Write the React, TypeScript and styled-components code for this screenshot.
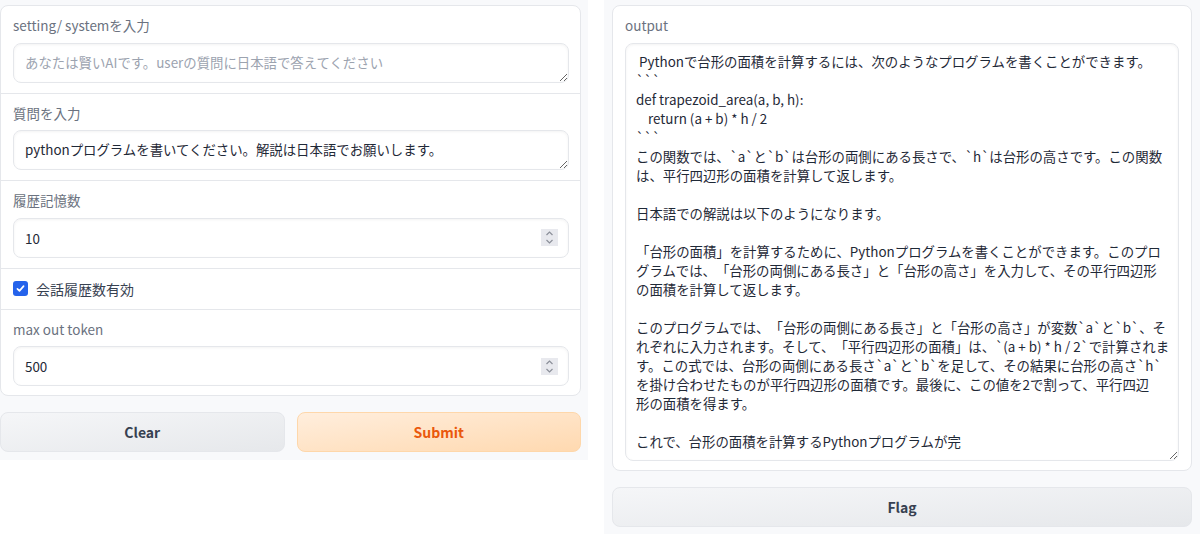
import styled, { createGlobalStyle } from 'styled-components';

const GlobalStyle = createGlobalStyle`
  html, body {
    margin: 0;
    padding: 0;
    background: #ffffff;
  }
  body {
    font-family: "Noto Sans CJK JP", "Liberation Sans", sans-serif;
    color: #1f2937;
    text-spacing-trim: space-all;
  }
  * {
    box-sizing: border-box;
  }
`;

const Page = styled.div`
  display: flex;
  gap: 16px;
  width: 1200px;
  height: 534px;
  align-items: flex-start;
`;

const Column = styled.div<{ $side: 'left' | 'right' }>`
  display: flex;
  flex-direction: column;
  gap: 16px;
  background: #f8f9fb;
  width: ${p => (p.$side === 'left' ? '588px' : '596px')};
  height: ${p => (p.$side === 'left' ? '460px' : '534px')};
  padding: ${p => (p.$side === 'left' ? '5px 7px 8px 0' : '5px 8px 7px 8px')};
`;

const Panel = styled.div`
  display: flex;
  flex-direction: column;
  background: #ffffff;
  border: 1px solid #e5e7eb;
  border-radius: 8px;
  overflow: hidden;
`;

const Field = styled.div<{ $compact?: boolean }>`
  display: flex;
  flex-direction: column;
  gap: 8px;
  padding: ${p => (p.$compact ? '10px 12px' : '10px 11px 10px 12px')};
  border-top: 1px solid #e5e7eb;

  &:first-child {
    border-top: none;
  }
`;

const Label = styled.span`
  font-size: 13.5px;
  line-height: 18.5px;
  color: #6b7280;
`;

const TextBox = styled.textarea`
  display: block;
  width: 100%;
  height: 40px;
  padding: 9px 11px;
  font-family: inherit;
  font-size: 13.4px;
  line-height: 19px;
  color: #1f2937;
  background: #ffffff;
  border: 1px solid #e5e7eb;
  border-radius: 8px;
  box-shadow: inset 0 1px 3px rgba(0, 0, 0, 0.05);
  outline: none;
  resize: vertical;
  overflow: hidden;
  text-spacing-trim: space-all;

  &::placeholder {
    color: #9ca3af;
  }
`;

const OutputBox = styled(TextBox)`
  height: 418px;
  padding: 8px 10px;
  white-space: pre;
`;

const NumberBox = styled.div`
  display: flex;
  align-items: center;
  justify-content: space-between;
  height: 40px;
  padding: 0 10px 0 11px;
  font-size: 13.4px;
  color: #1f2937;
  border: 1px solid #e5e7eb;
  border-radius: 8px;
  box-shadow: inset 0 1px 3px rgba(0, 0, 0, 0.05);
`;

const Spinner = styled.span`
  display: flex;
  align-items: center;
  justify-content: center;
  width: 17px;
  height: 17px;
  background: #e8e9ee;
`;

const CheckRow = styled.label`
  display: flex;
  align-items: center;
  gap: 8px;
  padding: 10px 12px;
  border-top: 1px solid #e5e7eb;
  font-size: 14px;
  line-height: 20px;
  color: #374151;
`;

const CheckBox = styled.span`
  display: flex;
  align-items: center;
  justify-content: center;
  width: 15px;
  height: 15px;
  border-radius: 3px;
  background: #2563eb;
`;

const ButtonRow = styled.div`
  display: flex;
  gap: 12px;
`;

const Button = styled.button<{ $variant?: 'primary' | 'secondary' }>`
  flex: 1;
  height: 40px;
  border-radius: 8px;
  font-family: inherit;
  font-size: 14px;
  font-weight: 700;
  cursor: pointer;
  border: 1px solid
    ${p => (p.$variant === 'primary' ? '#fed7aa' : '#e5e7eb')};
  background: ${p =>
    p.$variant === 'primary'
      ? 'linear-gradient(to bottom right, #ffeedd, #ffd9b0)'
      : 'linear-gradient(to bottom right, #f5f6f8, #e6e8eb)'};
  color: ${p => (p.$variant === 'primary' ? '#ea580c' : '#374151')};
`;

const OUTPUT = [
  ' Pythonで台形の面積を計算するには、次のようなプログラムを書くことができます。',
  '```',
  'def trapezoid_area(a, b, h):',
  '    return (a + b) * h / 2',
  '```',
  'この関数では、`a`と`b`は台形の両側にある長さで、`h`は台形の高さです。この関数',
  'は、平行四辺形の面積を計算して返します。',
  '',
  '日本語での解説は以下のようになります。',
  '',
  '「台形の面積」を計算するために、Pythonプログラムを書くことができます。このプロ',
  'グラムでは、「台形の両側にある長さ」と「台形の高さ」を入力して、その平行四辺形',
  'の面積を計算して返します。',
  '',
  'このプログラムでは、「台形の両側にある長さ」と「台形の高さ」が変数`a`と`b`、そ',
  'れぞれに入力されます。そして、「平行四辺形の面積」は、`(a + b) * h / 2`で計算されま',
  'す。この式では、台形の両側にある長さ`a`と`b`を足して、その結果に台形の高さ`h`',
  'を掛け合わせたものが平行四辺形の面積です。最後に、この値を2で割って、平行四辺',
  '形の面積を得ます。',
  '',
  'これで、台形の面積を計算するPythonプログラムが完',
].join('\n');

function SpinIcon() {
  return (
    <Spinner>
      <svg width="9" height="15" viewBox="0 0 9 15" fill="none" stroke="#8b8f99" strokeWidth="1.2">
        <path d="M1.5 5 L4.5 2 L7.5 5" />
        <path d="M1.5 10 L4.5 13 L7.5 10" />
      </svg>
    </Spinner>
  );
}

function NumberField({ label, value }: { label: string; value: number }) {
  return (
    <Field>
      <Label>{label}</Label>
      <NumberBox>
        <span>{value}</span>
        <SpinIcon />
      </NumberBox>
    </Field>
  );
}

export default function App() {
  return (
    <>
      <GlobalStyle />
      <Page>
        <Column $side="left">
          <Panel>
            <Field>
              <Label>setting/ systemを入力</Label>
              <TextBox rows={1} placeholder="あなたは賢いAIです。userの質問に日本語で答えてください" />
            </Field>
            <Field>
              <Label>質問を入力</Label>
              <TextBox rows={1} defaultValue="pythonプログラムを書いてください。解説は日本語でお願いします。" />
            </Field>
            <NumberField label="履歴記憶数" value={10} />
            <CheckRow>
              <CheckBox>
                <svg width="11" height="11" viewBox="0 0 16 16" fill="none" stroke="#fff" strokeWidth="2.4" strokeLinecap="round" strokeLinejoin="round">
                  <path d="M3.5 8.5 L6.5 11.5 L12.5 4.5" />
                </svg>
              </CheckBox>
              会話履歴数有効
            </CheckRow>
            <NumberField label="max out token" value={500} />
          </Panel>
          <ButtonRow>
            <Button $variant="secondary">Clear</Button>
            <Button $variant="primary">Submit</Button>
          </ButtonRow>
        </Column>
        <Column $side="right">
          <Panel>
            <Field $compact>
              <Label>output</Label>
              <OutputBox readOnly wrap="off" defaultValue={OUTPUT} />
            </Field>
          </Panel>
          <ButtonRow>
            <Button $variant="secondary">Flag</Button>
          </ButtonRow>
        </Column>
      </Page>
    </>
  );
}
